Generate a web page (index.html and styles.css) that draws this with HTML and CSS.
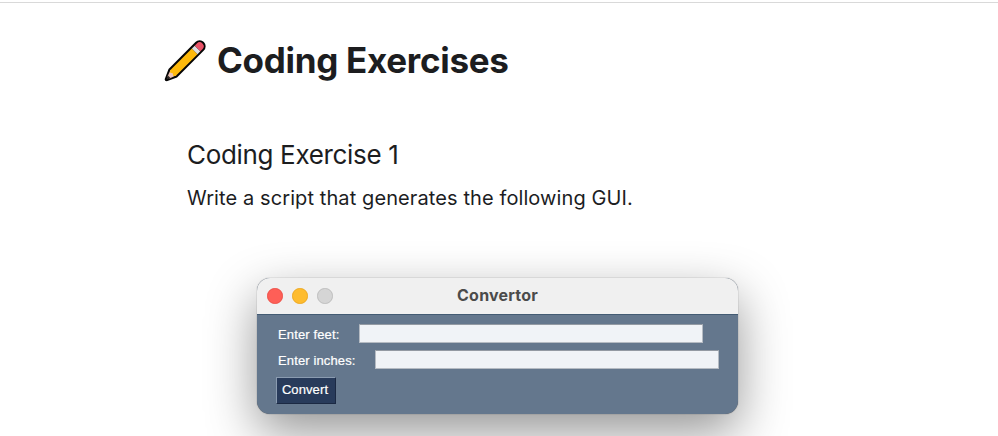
FILE: index.html
```
<!DOCTYPE html>
<html lang="en">
<head>
<meta charset="utf-8">
<title>Coding Exercises</title>
<link rel="stylesheet" href="styles.css">
</head>
<body>
<main class="page">
  <header class="heading">
    <svg class="pencil" viewBox="0 0 42 42" aria-hidden="true">
      <g transform="translate(1 41) rotate(-45)">
        <path d="M1 -1.500 L11 -6 H49 A6 6 0 0 1 49 6 H11 L1 1.500 Q-.5 0 1 -1.500 Z" fill="#050505"/>
        <path d="M5 -1.500 L12 -4 V4 L5 1.500 Z" fill="#edc4b5"/>
        <path d="M2 0 L6 -1.800 V1.800 Z" fill="#302b2a"/>
        <path d="M11 -4 H42 V4 H11 L9.500 2 L11 0 L9.500 -2 Z" fill="#fdb90b"/>
        <path d="M42 -4 H46 V4 H42 Z" fill="#dedfe1"/>
        <path d="M46 -4 H49 A4 4 0 0 1 49 4 H46 Z" fill="#e95368"/>
      </g>
    </svg>
    <h1 class="title">Coding Exercises</h1>
  </header>
  <section class="exercise">
    <h2 class="subtitle">Coding Exercise 1</h2>
    <p class="prompt">Write a script that generates the following GUI.</p>
    <div class="window">
      <div class="titlebar">
        <div class="lights"><span class="light red"></span><span class="light yellow"></span><span class="light gray"></span></div>
        <span class="window-title">Convertor</span>
      </div>
      <form class="form">
        <div class="row feet"><label for="feet">Enter feet:</label><input id="feet" type="text"></div>
        <div class="row inches"><label for="inches">Enter inches:</label><input id="inches" type="text"></div>
        <button class="convert" type="button">Convert</button>
      </form>
    </div>
  </section>
</main>
</body>
</html>
```
FILE: styles.css
```
* { box-sizing: border-box; }
body {
  margin: 0;
  height: 436px;
  overflow: hidden;
  background: #fff;
  color: #1c1d1f;
  font-family: Inter, sans-serif;
}
.page {
  margin-top: 2px;
  height: 434px;
  border-top: 1px solid #d9d9d9;
  padding: 36px 0 0 164px;
}
.heading { display: flex; align-items: center; gap: 11px; height: 44px; }
.pencil { width: 42px; height: 42px; flex: none; }
.title { margin: 0; padding-bottom: 2px; font-size: 35px; line-height: 42px; font-weight: 700; letter-spacing: -.3px; white-space: nowrap; }
.exercise { padding: 56px 0 0 23px; }
.subtitle { margin: 0; font-size: 26px; line-height: 32px; font-weight: 400; letter-spacing: -.33px; white-space: nowrap; }
.prompt { margin: 14px 0 0; font-size: 20px; line-height: 26px; letter-spacing: .1px; white-space: nowrap; }
.window {
  width: 481px;
  height: 136px;
  margin: 67px 0 0 70px;
  border-radius: 13px;
  overflow: hidden;
  background: #64778d;
  box-shadow: 0 0 1px rgba(0,0,0,.65), 0 18px 50px rgba(0,0,0,.42);
}
.titlebar {
  display: grid;
  grid-template-columns: 1fr auto 1fr;
  align-items: center;
  height: 37px;
  background: #f0f0f0;
  border-bottom: 1px solid #435b73;
}
.lights { display: flex; gap: 9.500px; padding-left: 10px; }
.light { width: 15.500px; height: 15.500px; border-radius: 50%; border: 1px solid; }
.red { background: #fe5f57; border-color: #ed5149; }
.yellow { background: #febc2e; border-color: #eda923; }
.gray { background: #d5d5d5; border-color: #bebebe; }
.window-title { padding-bottom: 2px; font-size: 16px; line-height: 18px; font-weight: 700; letter-spacing: .2px; color: #4b4b4b; }
.form { padding: 9px 0 0 19px; font-family: "Liberation Sans", sans-serif; color: #fff; }
.row { display: flex; align-items: flex-start; height: 20px; padding-left: 2px; font-size: 13px; letter-spacing: .13px; -webkit-text-stroke: .2px #fff; }
.row label { flex: none; padding-top: 1px; line-height: 20px; }
.feet label { width: 81px; }
.inches { margin-top: 6px; }
.inches label { width: 97px; }
.row input {
  width: 344px;
  height: 19px;
  margin: 0;
  padding: 0 2px;
  border: 1px solid #b5bbc3;
  border-top-color: #939aa3;
  border-radius: 0;
  background: #f0f3f7;
}
.convert {
  display: block;
  width: 60px;
  height: 27px;
  margin: 7px 0 0;
  padding: 0 2px 2px 0;
  border: 1px solid #1b2943;
  border-top-color: #8a9bb0;
  border-left-color: #8a9bb0;
  border-radius: 0;
  background: #283b5b;
  color: #fff;
  font: 13px "Liberation Sans", sans-serif;
  letter-spacing: .1px;
  -webkit-text-stroke: .2px #fff;
}
```
